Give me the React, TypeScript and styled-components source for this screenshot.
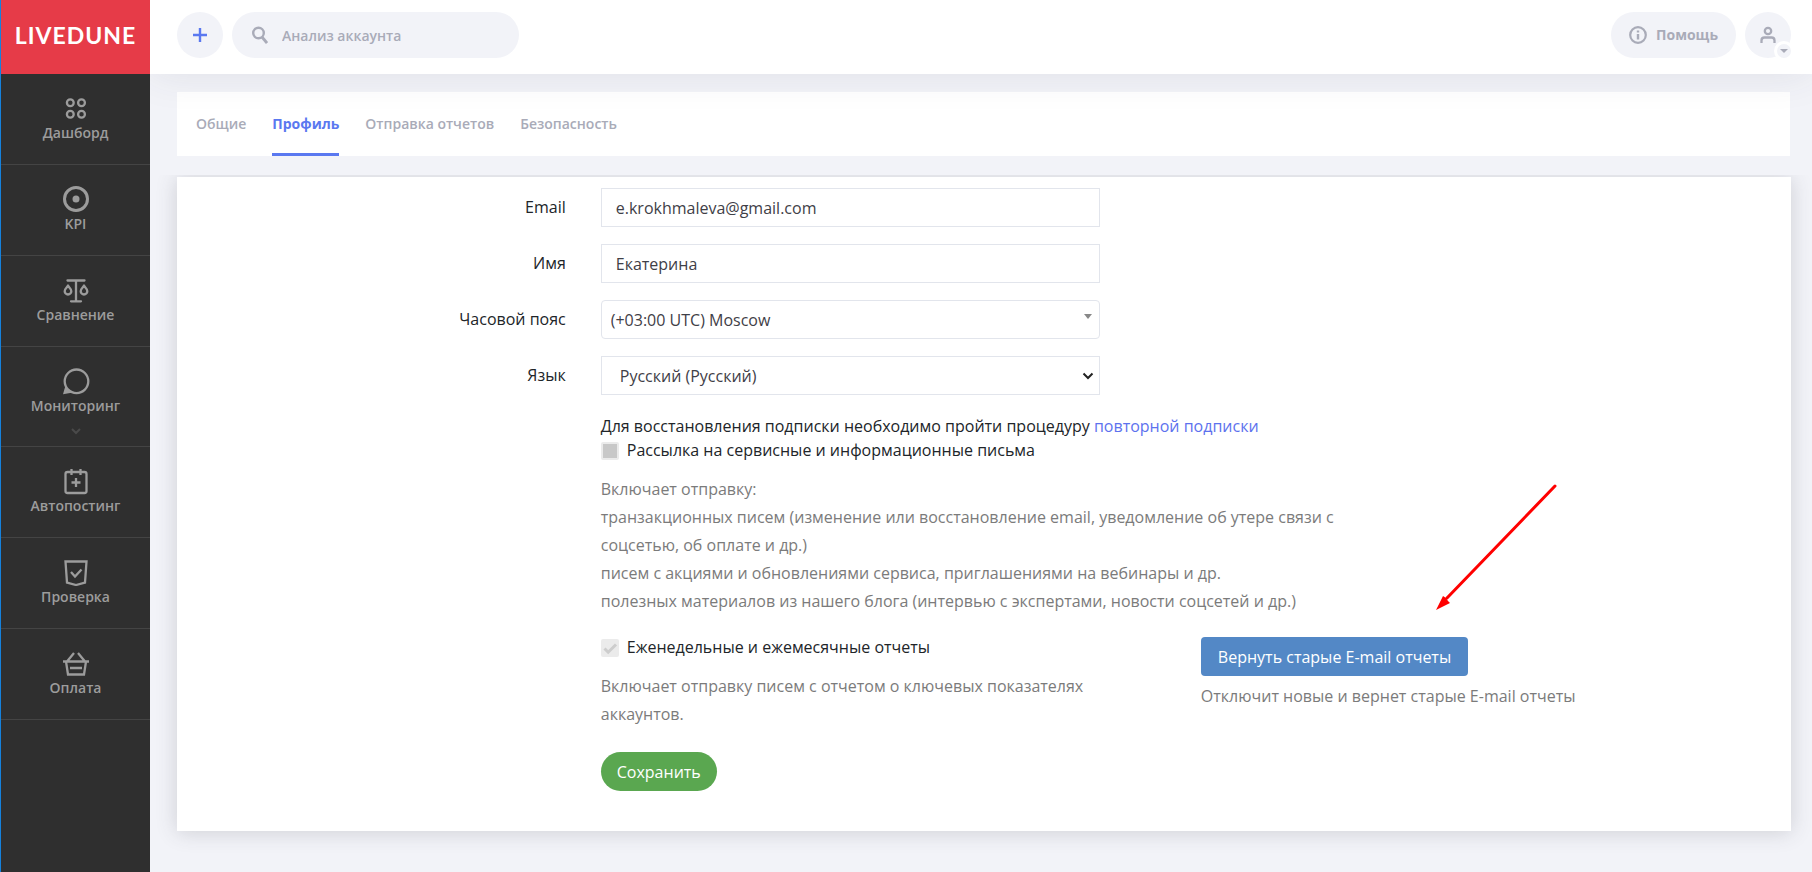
import React from "react";
import styled, { createGlobalStyle } from "styled-components";

const GlobalStyle = createGlobalStyle`
  *, *::before, *::after { box-sizing: border-box; }
  body {
    margin: 0;
    background: #f2f3f8;
    color: #212529;
    font-family: "Open Sans", "Noto Sans", sans-serif;
    font-size: 16px;
    line-height: 24px;
  }
  button, input, select { font: inherit; }
`;

const Page = styled.div`
  display: flex;
  min-height: 100vh;
`;

const Sidebar = styled.aside`
  position: relative;
  z-index: 2;
  flex: 0 0 150px;
  background: #2f2f2f;
  border-left: 1px solid #1581dc;
`;

const Brand = styled.a`
  display: flex;
  align-items: center;
  justify-content: center;
  height: 74px;
  padding-bottom: 4px;
  background: #e63b48;
  color: #fff;
  font-family: Lato, sans-serif;
  font-size: 23px;
  font-weight: 700;
  letter-spacing: 1px;
  text-decoration: none;
`;

const NavList = styled.ul`
  margin: 0;
  padding: 0;
  list-style: none;
`;

const NavLink = styled.a<{ $expandable?: boolean }>`
  display: flex;
  flex-direction: column;
  align-items: center;
  height: ${(p) => (p.$expandable ? 100 : 91)}px;
  padding-top: 20px;
  border-bottom: 1px solid #444;
  color: #9c9c9c;
  font-size: 14px;
  font-weight: 600;
  line-height: 20px;
  text-decoration: none;

  svg { display: block; }
`;

const NavLabel = styled.span`
  margin-top: 1px;
`;

const NavMore = styled.svg`
  margin-top: 12px;
`;

const Content = styled.div`
  flex: 1;
  min-width: 0;
  display: flex;
  flex-direction: column;
`;

const Header = styled.header`
  position: relative;
  z-index: 1;
  display: flex;
  align-items: center;
  gap: 9px;
  height: 74px;
  padding: 0 21px 4px 27px;
  background: #fff;
  box-shadow: 0 0 40px rgba(60, 60, 75, 0.1);
`;

const RoundButton = styled.button`
  position: relative;
  display: flex;
  align-items: center;
  justify-content: center;
  width: 46px;
  height: 46px;
  padding: 0;
  border: 0;
  border-radius: 50%;
  background: #f2f3f8;
`;

const MenuBadge = styled.span`
  position: absolute;
  right: -3px;
  bottom: -3px;
  display: flex;
  align-items: center;
  justify-content: center;
  width: 20px;
  height: 20px;
  border: 3px solid #fff;
  border-radius: 50%;
  background: #f2f3f8;
`;

const Search = styled.label`
  display: flex;
  align-items: center;
  gap: 14px;
  width: 287px;
  height: 46px;
  padding: 0 20px;
  border-radius: 23px;
  background: #f2f3f8;
`;

const SearchInput = styled.input`
  flex: 1;
  min-width: 0;
  padding: 2px 0 0;
  border: 0;
  outline: 0;
  background: transparent;
  color: #a9abb8;
  font-size: 14px;
  font-weight: 600;

  &::placeholder { color: #a9abb8; opacity: 1; }
`;

const HelpButton = styled.button`
  display: flex;
  align-items: center;
  gap: 9px;
  height: 46px;
  margin-left: auto;
  padding: 0 18px;
  border: 0;
  border-radius: 23px;
  background: #f2f3f8;
  color: #a9abb8;
  font-size: 14px;
  font-weight: 700;
`;

const Tabs = styled.nav`
  display: flex;
  gap: 26px;
  height: 64px;
  margin: 18px 22px 0 27px;
  padding: 0 19px;
  background: #fff;
`;

const Tab = styled.a<{ $active?: boolean }>`
  display: flex;
  align-items: center;
  padding-top: 3px;
  border-bottom: 3px solid ${(p) => (p.$active ? "#5a78f0" : "transparent")};
  color: ${(p) => (p.$active ? "#5a78f0" : "#a9abb8")};
  font-size: 14px;
  font-weight: ${(p) => (p.$active ? 700 : 600)};
  text-decoration: none;
`;

const Body = styled.main`
  flex: 1;
  margin-top: 19px;
  padding: 2px 21px 41px 27px;
  overflow: hidden;
`;

const Card = styled.form`
  padding: 11px 15px 40px 12px;
  background: #fff;
  box-shadow: 0 1px 20px rgba(60, 60, 70, 0.2);
`;

const FieldRow = styled.div`
  display: grid;
  grid-template-columns: 3fr 4fr 5fr;
  align-items: center;
  margin-bottom: 17px;
`;

const FieldLabel = styled.label`
  padding: 0 20px 2px 0;
  text-align: right;
`;

const Control = styled.div`
  position: relative;
  margin: 0 15px;
`;

const TextInput = styled.input`
  display: block;
  width: 100%;
  height: 39px;
  padding: 0 14px;
  border: 1px solid #e2e5ec;
  border-radius: 0;
  background: #fff;
  color: #3f4047;
`;

const Select = styled.select<{ $rounded?: boolean }>`
  display: block;
  width: 100%;
  height: 39px;
  padding: 0 ${(p) => (p.$rounded ? 9 : 18)}px;
  border: 1px solid #e2e5ec;
  border-radius: ${(p) => (p.$rounded ? 4 : 0)}px;
  appearance: none;
  background: #fff;
  color: #3f4047;
`;

const SelectArrow = styled.svg`
  position: absolute;
  top: 14px;
  right: 6px;
  pointer-events: none;
`;

const Details = styled.div`
  display: grid;
  grid-template-columns: 3fr 9fr;
  margin-top: 19px;
`;

const DetailsBody = styled.div`
  grid-column: 2;
  padding: 0 15px;
`;

const Paragraph = styled.p`
  margin: 0;
`;

const Link = styled.a`
  color: #5d72ee;
  text-decoration: none;
`;

const CheckLabel = styled.label`
  display: flex;
  align-items: flex-start;
  gap: 8px;
`;

const CheckBox = styled.input<{ $filled?: boolean }>`
  flex: none;
  width: 18px;
  height: 18px;
  margin: 4px 0 0;
  border: ${(p) => (p.$filled ? 2 : 0)}px solid #ebebeb;
  border-radius: 2px;
  appearance: none;
  background: ${(p) => (p.$filled ? "#c8c8c8" : "#ebebeb")};
`;

const CheckHolder = styled.span`
  position: relative;
  display: flex;
`;

const CheckMark = styled.svg`
  position: absolute;
  top: 4px;
  left: 0;
  pointer-events: none;
`;

const Help = styled.p`
  max-width: 762px;
  margin: 13px 0 0;
  color: #7b7b7b;
  line-height: 28px;
`;

const Reports = styled.div`
  display: grid;
  grid-template-columns: 499fr 560fr;
  column-gap: 101px;
  margin-top: 20px;
`;

const Legacy = styled.div`
  position: relative;
  padding-top: 2px;
`;

const LegacyButton = styled.button`
  display: block;
  height: 39px;
  padding: 0 17px;
  border: 0;
  border-radius: 4px;
  background: #5388c6;
  color: #fff;
`;

const LegacyHelp = styled(Help)`
  margin-top: 6px;
`;

const SaveButton = styled.button`
  height: 39px;
  margin-top: 24px;
  padding: 0 16px;
  border: 0;
  border-radius: 20px;
  background: #5aa750;
  color: #fff;
`;

const Pointer = styled.svg`
  position: absolute;
  top: -154px;
  left: 234px;
  pointer-events: none;
`;

const Icon = ({ children }: { children: React.ReactNode }) => (
  <svg width="28" height="28" viewBox="0 0 28 28" fill="none" stroke="#9c9c9c" strokeWidth="2.300" aria-hidden="true">
    {children}
  </svg>
);

const navItems = [
  {
    label: "Дашборд",
    icon: (
      <>
        <circle cx="8.300" cy="8.800" r="3.400" />
        <circle cx="19.500" cy="8.800" r="3.400" />
        <circle cx="8.300" cy="20.200" r="3.400" />
        <circle cx="19.500" cy="20.200" r="3.400" />
      </>
    ),
  },
  {
    label: "KPI",
    icon: (
      <>
        <circle cx="14" cy="14" r="11.500" strokeWidth="3" />
        <circle cx="14" cy="14" r="3.500" fill="#9c9c9c" stroke="none" />
      </>
    ),
  },
  {
    label: "Сравнение",
    icon: (
      <>
        <path d="M5.500 4.500h17M14 4.500V25M9 25.300h10" strokeLinecap="round" />
        <path d="M6 9.800c-1.600 1.900-3.300 3.600-3.300 5.400a3.300 3.300 0 0 0 6.600 0c0-1.800-1.700-3.500-3.300-5.400zM22 9.800c-1.600 1.900-3.300 3.600-3.300 5.400a3.300 3.300 0 0 0 6.600 0c0-1.800-1.700-3.500-3.300-5.400z" />
      </>
    ),
  },
  {
    label: "Мониторинг",
    expandable: true,
    icon: (
      <>
        <circle cx="14.500" cy="14.300" r="11.800" />
        <path d="M3.500 18.500 1 27.300l8.500-1.500z" fill="#9c9c9c" stroke="none" />
      </>
    ),
  },
  {
    label: "Автопостинг",
    icon: (
      <>
        <rect x="3.500" y="5" width="21" height="21" rx="2" />
        <path d="M9.500 2v6M18.500 2v6M14 11v9M9.500 15.500h9" />
      </>
    ),
  },
  {
    label: "Проверка",
    icon: (
      <>
        <path d="M3.500 3.500h21L23 24.500l-9 2.500-9-2.500z" />
        <path d="m9 14 4 4.500 6.500-7" />
      </>
    ),
  },
  {
    label: "Оплата",
    icon: (
      <>
        <path d="M1 12.500h26M4 12.500l2 13h16l2-13M5 12.500l7-8.500M23 12.500 16 4M8 19h12" />
      </>
    ),
  },
];

const tabs = ["Общие", "Профиль", "Отправка отчетов", "Безопасность"];

export default function App() {
  return (
    <>
      <GlobalStyle />
      <Page>
        <Sidebar>
          <Brand href="#">LIVEDUNE</Brand>
          <NavList>
            {navItems.map((item) => (
              <li key={item.label}>
                <NavLink href="#" $expandable={item.expandable}>
                  <Icon>{item.icon}</Icon>
                  <NavLabel>{item.label}</NavLabel>
                  {item.expandable && (
                    <NavMore width="10" height="7" viewBox="0 0 10 7" fill="none" stroke="#4a4a4a" strokeWidth="2">
                      <path d="m1 1 4 4 4-4" />
                    </NavMore>
                  )}
                </NavLink>
              </li>
            ))}
          </NavList>
        </Sidebar>

        <Content>
          <Header>
            <RoundButton type="button" aria-label="Добавить">
              <svg width="14" height="14" viewBox="0 0 14 14" stroke="#5a78f0" strokeWidth="2.400">
                <path d="M7 0v14M0 7h14" />
              </svg>
            </RoundButton>
            <Search>
              <svg width="16" height="18" viewBox="0 0 16 18" fill="none" stroke="#a9abb8" strokeWidth="2.400">
                <circle cx="6.500" cy="7" r="5.300" />
                <path d="m10 11 5 6" strokeWidth="2.800" />
              </svg>
              <SearchInput type="text" placeholder="Анализ аккаунта" aria-label="Анализ аккаунта" />
            </Search>
            <HelpButton type="button">
              <svg width="18" height="18" viewBox="0 0 18 18" fill="none" stroke="#a9abb8" strokeWidth="2.200">
                <circle cx="9" cy="9" r="7.800" />
                <path d="M9 8v5.500M9 4.500v2" strokeWidth="2.400" />
              </svg>
              Помощь
            </HelpButton>
            <RoundButton type="button" aria-label="Аккаунт">
              <svg width="16" height="18" viewBox="0 0 16 18" fill="none" stroke="#a9abb8" strokeWidth="2.300">
                <circle cx="8" cy="5" r="3.200" />
                <path d="M1.500 17v-2.500c0-2 1.200-3 3-3h7c1.800 0 3 1 3 3V17" />
              </svg>
              <MenuBadge>
                <svg width="8" height="4" viewBox="0 0 8 4" fill="#a9abb8">
                  <path d="M0 0h8L4 4z" />
                </svg>
              </MenuBadge>
            </RoundButton>
          </Header>

          <Tabs>
            {tabs.map((tab) => (
              <Tab key={tab} href="#" $active={tab === "Профиль"}>
                {tab}
              </Tab>
            ))}
          </Tabs>

          <Body>
            <Card>
              <FieldRow>
                <FieldLabel htmlFor="email">Email</FieldLabel>
                <Control>
                  <TextInput id="email" type="text" defaultValue="e.krokhmaleva@gmail.com" />
                </Control>
              </FieldRow>
              <FieldRow>
                <FieldLabel htmlFor="name">Имя</FieldLabel>
                <Control>
                  <TextInput id="name" type="text" defaultValue="Екатерина" />
                </Control>
              </FieldRow>
              <FieldRow>
                <FieldLabel htmlFor="timezone">Часовой пояс</FieldLabel>
                <Control>
                  <Select id="timezone" $rounded>
                    <option>(+03:00 UTC) Moscow</option>
                  </Select>
                  <SelectArrow width="12" height="12" viewBox="0 0 12 12" fill="#888">
                    <path d="M2 0h8L6 5z" />
                  </SelectArrow>
                </Control>
              </FieldRow>
              <FieldRow>
                <FieldLabel htmlFor="language">Язык</FieldLabel>
                <Control>
                  <Select id="language">
                    <option>Русский (Русский)</option>
                  </Select>
                  <SelectArrow width="12" height="12" viewBox="0 0 12 12" fill="none" stroke="#222" strokeWidth="2">
                    <path d="m1.500 3.500 4.500 4.500 4.500-4.500" />
                  </SelectArrow>
                </Control>
              </FieldRow>

              <Details>
                <DetailsBody>
                  <Paragraph>
                    Для восстановления подписки необходимо пройти процедуру <Link href="#">повторной подписки</Link>
                  </Paragraph>
                  <CheckLabel>
                    <CheckBox type="checkbox" disabled $filled />
                    Рассылка на сервисные и информационные письма
                  </CheckLabel>
                  <Help>
                    Включает отправку:
                    <br />
                    транзакционных писем (изменение или восстановление email, уведомление об утере связи с соцсетью, об
                    оплате и др.)
                    <br />
                    писем с акциями и обновлениями сервиса, приглашениями на вебинары и др.
                    <br />
                    полезных материалов из нашего блога (интервью с экспертами, новости соцсетей и др.)
                  </Help>

                  <Reports>
                    <div>
                      <CheckLabel>
                        <CheckHolder>
                          <CheckBox type="checkbox" defaultChecked disabled />
                          <CheckMark width="18" height="18" viewBox="0 0 18 18" fill="none" stroke="#cdcdcd" strokeWidth="3">
                            <path d="m3.500 9.500 3.700 3.700L15 5.500" />
                          </CheckMark>
                        </CheckHolder>
                        Еженедельные и ежемесячные отчеты
                      </CheckLabel>
                      <Help>Включает отправку писем с отчетом о ключевых показателях аккаунтов.</Help>
                    </div>
                    <Legacy>
                      <LegacyButton type="button">Вернуть старые E-mail отчеты</LegacyButton>
                      <LegacyHelp>Отключит новые и вернет старые E-mail отчеты</LegacyHelp>
                      <Pointer width="124" height="132" viewBox="0 0 124 132" fill="#f00">
                        <path d="M120 5 12 117" stroke="#f00" strokeWidth="3" strokeLinecap="round" />
                        <path d="m1 129 7-14 3 2 2 3 2 2z" />
                      </Pointer>
                    </Legacy>
                  </Reports>

                  <SaveButton type="button">Сохранить</SaveButton>
                </DetailsBody>
              </Details>
            </Card>
          </Body>
        </Content>
      </Page>
    </>
  );
}
